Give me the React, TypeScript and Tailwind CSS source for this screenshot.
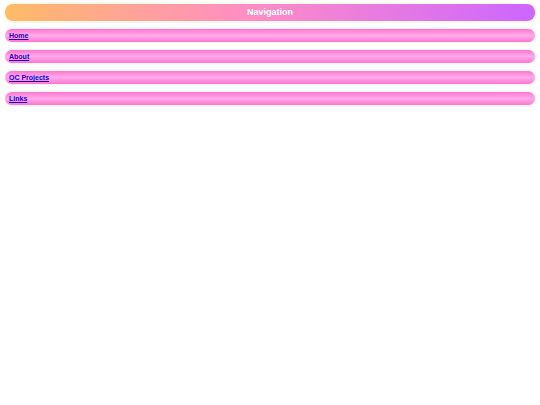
const links = ["Home", "About", "OC Projects", "Links"];

export default function App() {
  return (
    <div className="min-h-screen bg-white px-[5px] pt-[4px] font-['Liberation_Sans',Arial,sans-serif]">
      <div className="flex h-[17px] items-center justify-center rounded-[8px] bg-[linear-gradient(to_right,#ffbb66,#ff8ec4_45%,#cc66ff)] shadow-[0_0_3px_#ffe2b0]">
        <span className="text-[9px] font-bold leading-none text-white">Navigation</span>
      </div>
      <ul className="mt-[8px] flex flex-col gap-[8px]">
        {links.map((l) => (
          <li
            key={l}
            className="flex h-[13px] items-center rounded-full bg-[linear-gradient(to_bottom,#ff77cc,#ffaaee_50%,#ff77cc)] px-[4px] shadow-[0_0_2px_#ffc8c8]"
          >
            <a href="#" className="text-[7px] font-bold leading-none text-[#2200cc] underline">
              {l}
            </a>
          </li>
        ))}
      </ul>
    </div>
  );
}
